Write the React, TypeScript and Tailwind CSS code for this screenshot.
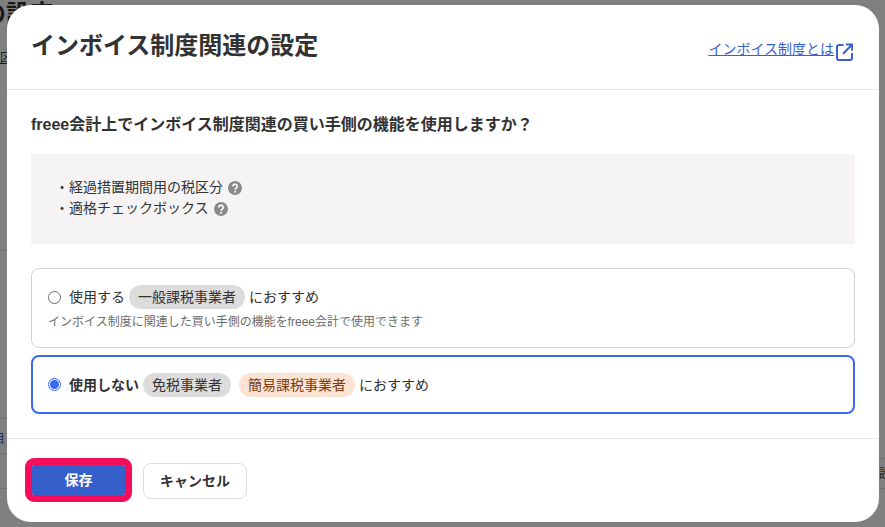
const FONT = "font-['Liberation_Sans','Noto_Sans_CJK_JP',sans-serif]";

function HelpIcon() {
  return (
    <svg viewBox="0 0 14 14" className="w-[14px] h-[14px] shrink-0" aria-hidden="true">
      <circle cx="7" cy="7" r="7" fill="#8c8989" />
      <path d="M4.9 5.4a2.15 2.15 0 1 1 3.4 1.7c-.8.55-1.2.9-1.2 1.6" fill="none" stroke="#fff" strokeWidth="1.6" />
      <circle cx="7.1" cy="10.7" r="1" fill="#fff" />
    </svg>
  );
}

function OpenIcon() {
  return (
    <svg viewBox="0 0 17 18" className="ml-[2px] mt-[3px] h-[18px] w-[17px] shrink-0" fill="none" stroke="#3b5fd0" strokeWidth="2" aria-hidden="true">
      <path d="M7.5 2H3a2 2 0 0 0-2 2v11a2 2 0 0 0 2 2h11a2 2 0 0 0 2-2v-5" />
      <path d="M10 1.5h6.2v6.2M16 1.7 7 10.7" />
    </svg>
  );
}

function Tag({ children, orange }: { children: React.ReactNode; orange?: boolean }) {
  return (
    <span className={`inline-flex items-center h-6 px-[9px] rounded-full text-sm ${orange ? "bg-[#fde3d3] text-[#7a3c10]" : "bg-[#dcdcdc] text-[#323232]"}`}>
      {children}
    </span>
  );
}

export default function App() {
  return (
    <div className={`relative h-[527px] w-[885px] overflow-hidden bg-[#808080] text-[#323232] ${FONT}`}>
      {/* page behind the overlay */}
      <div className="absolute left-[-18px] top-[-2px] text-2xl font-bold text-[#191919]">の設定</div>
      <div className="absolute left-0 top-[50px] text-xs text-[#191919] underline">区</div>
      <div className="absolute left-0 top-[250px] h-px w-[7px] bg-[#6e6e6e]" />
      <div className="absolute left-0 top-[418px] h-px w-[7px] bg-[#6e6e6e]" />
      <div className="absolute left-[-7px] top-[431px] text-xs text-[#1c2f68]">目</div>
      <div className="absolute left-0 top-[453px] h-px w-[7px] bg-[#6e6e6e]" />
      <div className="absolute left-0 top-[488px] h-px w-[7px] bg-[#6e6e6e]" />
      <div className="absolute right-0 top-[466px] text-xs text-[#191919] w-[6px] overflow-hidden">設</div>
      <div className="absolute right-0 top-[458px] h-px w-[6px] bg-[#6e6e6e]" />
      <div className="absolute right-0 top-[488px] h-px w-[6px] bg-[#6e6e6e]" />

      <div className="relative ml-[7px] mt-[5px] flex h-[517px] w-[872px] flex-col rounded-3xl bg-white">
        <header className="flex h-[85px] shrink-0 items-start justify-between border-b border-[#e6e6e6] pl-6 pr-[26px]">
          <h1 className="mt-[24px] text-2xl leading-[34px] font-bold">インボイス制度関連の設定</h1>
          <a className="mt-[35px] flex items-start text-sm leading-[18px] text-[#3b5fd0]">
            <span className="underline">インボイス制度とは</span>
            <OpenIcon />
          </a>
        </header>

        <main className="flex-1 px-6">
          <p className="mt-[23px] text-base leading-6 font-bold">freee会計上でインボイス制度関連の買い手側の機能を使用しますか？</p>
          <div className="mt-[17px] h-[90px] bg-[#f5f3f4] pl-6 pt-[23px] text-sm leading-[21px]">
            <div className="flex items-center gap-[5px]">
              <span>・経過措置期間用の税区分</span>
              <HelpIcon />
            </div>
            <div className="flex items-center gap-[5px]">
              <span>・適格チェックボックス</span>
              <HelpIcon />
            </div>
          </div>

          <div className="mt-[24px] h-[80px] rounded-lg border border-[#d2d2d2] px-4 pt-[16px]">
            <div className="flex h-6 items-center text-sm">
              <span className="h-[13px] w-[13px] rounded-full border border-[#6e6b6b] bg-white" />
              <span className="ml-2">使用する</span>
              <span className="ml-[4px]"><Tag>一般課税事業者</Tag></span>
              <span className="ml-[4px]">におすすめ</span>
            </div>
            <p className="mt-1 text-xs leading-[18px] text-[#6e6b6b]">インボイス制度に関連した買い手側の機能をfreee会計で使用できます</p>
          </div>

          <div className="mt-[7px] flex h-[59px] items-center rounded-lg border-2 border-[#3b68ee] px-[15px] text-sm">
            <span className="flex h-[13px] w-[13px] items-center justify-center rounded-full border border-[#3b68ee] bg-white">
              <span className="h-[9px] w-[9px] rounded-full bg-[#3b68ee]" />
            </span>
            <span className="ml-2 font-bold">使用しない</span>
            <span className="ml-[4px]"><Tag>免税事業者</Tag></span>
            <span className="ml-2"><Tag orange>簡易課税事業者</Tag></span>
            <span className="ml-[4px]">におすすめ</span>
          </div>
        </main>

        <footer className="flex h-[84px] shrink-0 items-center border-t border-[#e6e6e6] pl-[25px]">
          <button className="mb-px h-[30px] w-[93px] rounded-[2px] bg-[#3560cc] text-sm font-bold text-white outline-[7px] outline-[#f50f5a] [outline-style:solid]">
            保存
          </button>
          <button className="ml-[18px] h-9 w-[104px] rounded-lg border border-[#dcdcdc] bg-white text-sm font-bold text-[#323232]">
            キャンセル
          </button>
        </footer>
      </div>
    </div>
  );
}
